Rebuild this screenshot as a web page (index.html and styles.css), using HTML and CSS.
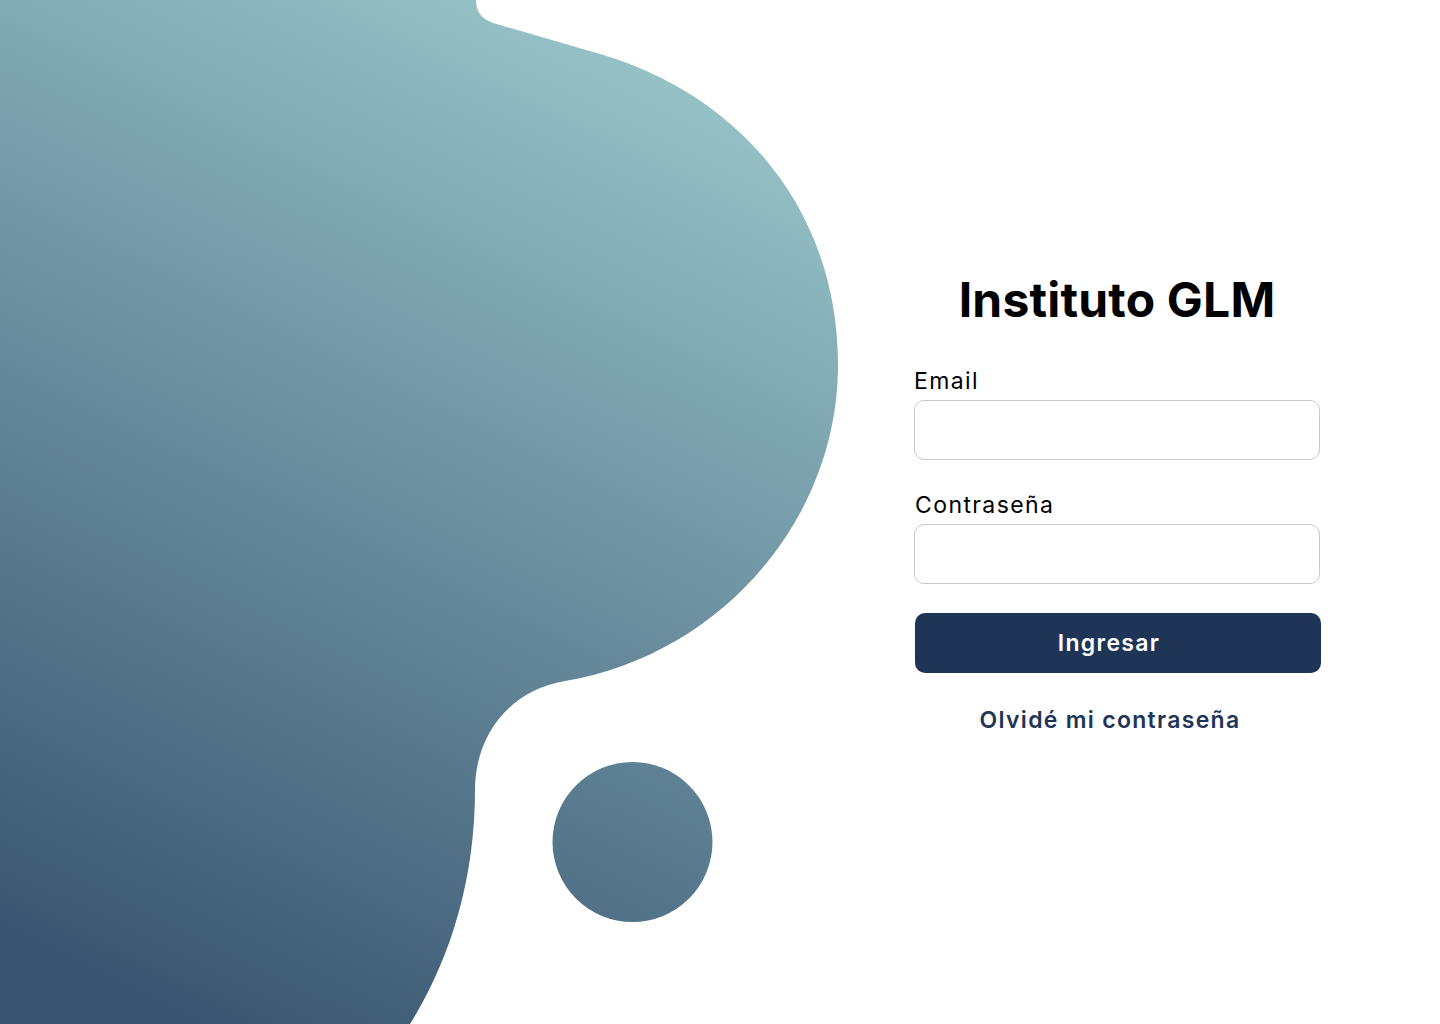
FILE: index.html
```html
<!DOCTYPE html>
<html lang="es">
<head>
<meta charset="utf-8">
<title>Instituto GLM</title>
<link rel="stylesheet" href="styles.css">
</head>
<body>
<div class="page">
  <div class="art">
    <svg width="860" height="1024" viewBox="0 0 860 1024" xmlns="http://www.w3.org/2000/svg" aria-hidden="true">
      <defs>
        <linearGradient id="blob" gradientUnits="userSpaceOnUse" x1="700" y1="0" x2="200" y2="1024">
          <stop offset="0" stop-color="#9ccacd"/>
          <stop offset="1" stop-color="#3a5571"/>
        </linearGradient>
      </defs>
      <path fill="url(#blob)" d="M0,0 H476 C476,12 482,19 493,23 L600,54 C740,95 838,210 838,365 C838,520 720,655 565,681 C510,690 475,735 475,790 C475,880 450,960 410,1024 H0 Z"/>
      <circle cx="632.5" cy="842" r="80" fill="url(#blob)"/>
    </svg>
  </div>
  <main class="panel">
    <form class="login">
      <h1 class="title">Instituto GLM</h1>
      <label class="label" for="email">Email</label>
      <input class="field" id="email" type="email">
      <label class="label label-gap" for="pass">Contraseña</label>
      <input class="field" id="pass" type="password">
      <button class="submit" type="button">Ingresar</button>
      <a class="forgot" href="#">Olvidé mi contraseña</a>
    </form>
  </main>
</div>
</body>
</html>
```
FILE: styles.css
```css
* { box-sizing: border-box; }
html, body { margin: 0; padding: 0; background: #ffffff; }
body { font-family: "Inter", "Noto Sans", sans-serif; color: #000; }

.page {
  display: flex;
  width: 1440px;
  height: 1024px;
  overflow: hidden;
}

.art { flex: none; width: 860px; height: 1024px; }
.art svg { display: block; }

.panel {
  flex: 1;
  padding-top: 270px;
  padding-left: 54px;
}

.login {
  width: 406px;
  display: flex;
  flex-direction: column;
}

.title {
  margin: 0 0 40px;
  font-size: 48px;
  line-height: 60px;
  font-weight: 700;
  text-align: center;
  letter-spacing: 0.2px;
}

.label {
  display: block;
  font-size: 23px;
  line-height: 22px;
  padding-bottom: 8px;
  font-weight: 400;
  letter-spacing: 1.4px;
}

.label-gap { margin-top: 34px; padding-left: 1px; }

.field {
  display: block;
  width: 406px;
  height: 60px;
  border: 1px solid #c9c9c9;
  border-radius: 10px;
  background: #fff;
  font: inherit;
  padding: 0 16px;
  margin: 0;
}

.submit {
  margin: 29px 0 0 1px;
  width: 406px;
  height: 60px;
  border: none;
  border-radius: 10px;
  background: #1f3557;
  color: #ffffff;
  font-family: inherit;
  font-size: 23px;
  font-weight: 600;
  letter-spacing: 1.3px;
  padding: 0 18px 0 0;
}

.forgot {
  margin-top: 32px;
  display: block;
  text-align: center;
  font-size: 23px;
  line-height: 30px;
  font-weight: 600;
  letter-spacing: 1.3px;
  color: #1f3557;
  text-decoration: none;
  padding-right: 14px;
}
```
